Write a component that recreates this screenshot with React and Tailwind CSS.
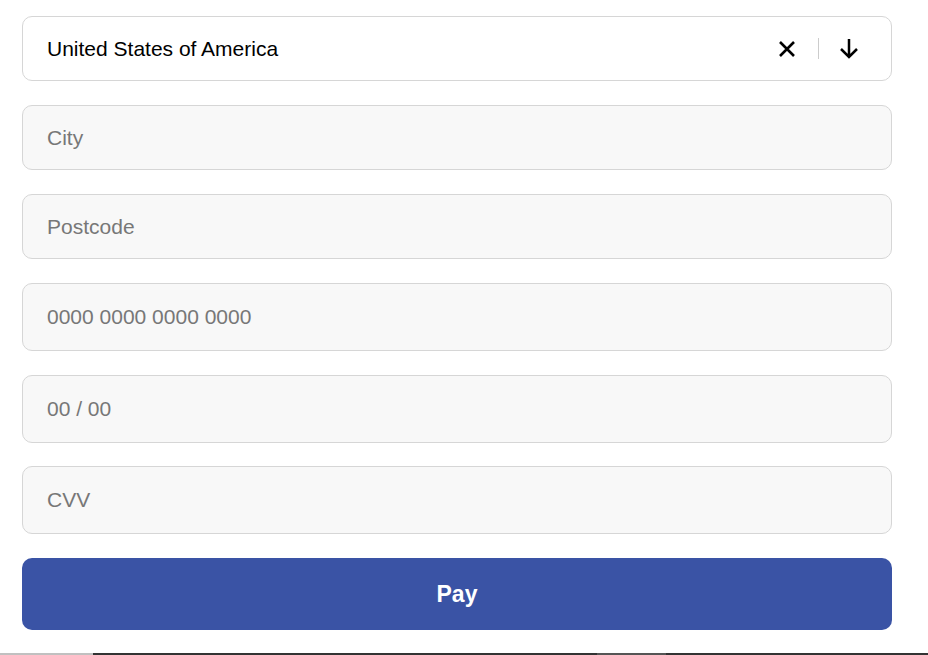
import React from "react";

const font = { fontFamily: '"Liberation Sans", Arial, sans-serif' };

function Field({ placeholder, h }) {
  return (
    <div
      className={`flex items-center rounded-[10px] border border-[#d6d6d6] bg-[#f8f8f8] pl-6 ${h}`}
    >
      <span className="text-[21px] text-[#777777]">{placeholder}</span>
    </div>
  );
}

export default function App() {
  return (
    <div className="w-[928px] h-[655px] bg-white flex flex-col" style={font}>
      <div className="flex flex-col pt-4 pl-[22px] w-[892px]">
        <div className="flex items-center h-[65px] rounded-[10px] border border-[#d6d6d6] bg-white pl-6 pr-[32px]">
          <span className="flex-1 text-[21px] text-black">United States of America</span>
          <svg width="18" height="18" viewBox="0 0 18 18" className="mr-[22px]">
            <path d="M2 2 L16 16 M16 2 L2 16" stroke="#000" strokeWidth="2.6" fill="none" />
          </svg>
          <div className="w-px h-[21px] bg-[#cccccc] mr-[20px]" />
          <svg width="20" height="21" viewBox="0 0 20 21">
            <path d="M10 1 L10 19 M2 11 L10 19 L18 11" stroke="#000" strokeWidth="2.5" fill="none" strokeLinejoin="miter" />
          </svg>
        </div>
        <div className="mt-6">
          <Field placeholder="City" h="h-[65px]" />
        </div>
        <div className="mt-6">
          <Field placeholder="Postcode" h="h-[65px]" />
        </div>
        <div className="mt-6">
          <Field placeholder="0000 0000 0000 0000" h="h-[68px]" />
        </div>
        <div className="mt-6">
          <Field placeholder="00 / 00" h="h-[68px]" />
        </div>
        <div className="mt-[23px]">
          <Field placeholder="CVV" h="h-[68px]" />
        </div>
        <div className="mt-6 flex items-center justify-center h-[72px] rounded-[10px] bg-[#3a53a5]">
          <span className="text-[23px] font-bold text-white">Pay</span>
        </div>
      </div>
      <div className="mt-auto flex h-[2px] w-full">
        <div className="w-[93px] bg-[#c0c0c0]" />
        <div className="w-[504px] bg-[#333333]" />
        <div className="w-[69px] bg-[#555555]" />
        <div className="flex-1 bg-[#333333]" />
      </div>
    </div>
  );
}
